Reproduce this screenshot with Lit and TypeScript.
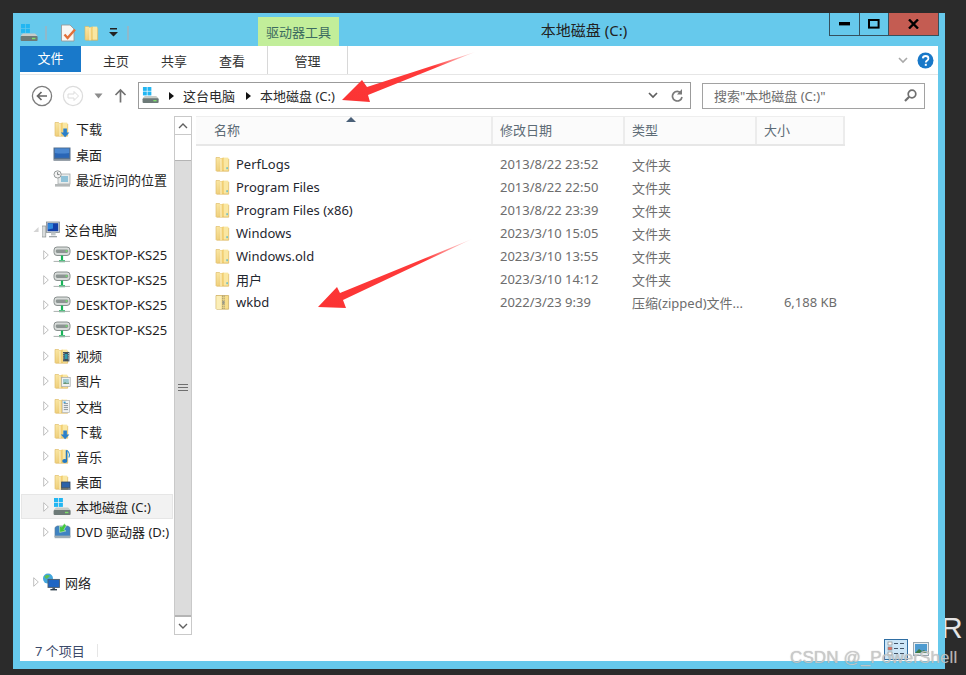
import { LitElement, html, css, svg } from "lit";
import { customElement } from "lit/decorators.js";

const defs = (id: string) => svg`<defs>
  <linearGradient id=${id} x1="0" y1="0" x2="1" y2="1">
    <stop offset="0" stop-color="#fbe9a8"/><stop offset="1" stop-color="#e6bd5c"/>
  </linearGradient></defs>`;

let uid = 0;
const folderBase = (overlay: unknown = null, dot = true) => {
  const id = "f" + uid++;
  return html`<svg class="ic" width="18" height="18" viewBox="0 0 18 18">
    ${defs(id)}
    <path d="M2 2.5h3.5l1 1H14l.7.7V16.2H2.6L2 15.6z" fill="url(#${id})" stroke="#dcb65c" stroke-width=".6"/>
    <path d="M7 3.4 9.6 2.2v12.6L7 16.2z" fill="#f2cf72"/>
    <path d="M7 3.4V16.2" stroke="#fdf3c9" stroke-width="1.1"/>
    <path d="M9.8 2.6h4.4v13H9.8z" fill="#fae7a1"/>
    ${dot ? svg`<rect x="12.4" y="12.2" width="1.4" height="2" fill="#5fb8c9"/>` : null}
    ${overlay}
  </svg>`;
};

const zipIcon = () => html`<svg class="ic" width="18" height="18" viewBox="0 0 18 18">
  <path d="M2 2.5h12.6v13.7H2.6L2 15.6z" fill="#f7de8c" stroke="#c9a95a" stroke-width=".7"/>
  <path d="M2.4 3h5v13h-5z" fill="#fbeeb8"/>
  <path d="M8.2 3.2h2.4M8.2 5.2h2.4M8.2 7.2h2.4M8.2 9.2h2.4M8.2 11.2h2.4M8.2 13.2h2.4M8.2 15.2h2.4" stroke="#7b7b6a" stroke-width="1" stroke-dasharray="1.2 .6"/>
  <rect x="8.4" y="8" width="2" height="3.4" fill="#9a9a8a"/>
</svg>`;

const driveIcon = (w = 18) => html`<svg class="ic" width=${w} height=${w} viewBox="0 0 18 18">
  <rect x="1" y="0" width="4.1" height="4.1" fill="#22b6f2"/><rect x="5.8" y="0" width="4.1" height="4.1" fill="#22b6f2"/>
  <rect x="1" y="4.8" width="4.1" height="4.1" fill="#22b6f2"/><rect x="5.8" y="4.8" width="4.1" height="4.1" fill="#22b6f2"/>
  <path d="M1 11.5 3 9.6h12l2.2 2v1H1z" fill="#c8ccc8"/>
  <rect x=".6" y="12" width="17" height="5" rx="1" fill="#6d7a78"/>
  <rect x="12" y="13.8" width="3.4" height="1.4" fill="#7de26a"/>
</svg>`;

const netDrive = () => html`<svg class="ic" width="18" height="18" viewBox="0 0 18 18">
  <rect x="1" y="1" width="16" height="8.5" rx="3" fill="#d8dcda" stroke="#7f8684" stroke-width=".9"/>
  <rect x="2.8" y="3.4" width="12.4" height="3.6" rx="1.4" fill="#8d9593"/>
  <rect x="12.6" y="4.2" width="1.8" height="1.6" fill="#6fe06a"/>
  <path d="M9 9.5V14" stroke="#18b45a" stroke-width="2.2"/>
  <path d="M6 14.2h6v2H6z" fill="#18b45a"/>
  <path d="M.6 15.4H17" stroke="#a9b0ae" stroke-width="1"/>
</svg>`;

const arrowDown = svg`<path d="M10.3 8.4h3.6v4h2.5l-4.3 4.8-4.3-4.8h2.5z" fill="#2c80c9"/>`;
const filmOv = svg`<rect x="10" y="5" width="6.4" height="9.4" fill="#41505a"/><path d="M10.8 6v7.4M15.6 6v7.4" stroke="#cfd6da" stroke-width=".9" stroke-dasharray="1 .8"/><rect x="11.8" y="7" width="2.8" height="5" fill="#2f9ab0"/>`;
const picOv = svg`<rect x="8.6" y="5.4" width="8.6" height="9.2" fill="#eef1f2" stroke="#a3a8aa" stroke-width=".7"/><rect x="10" y="7" width="5.8" height="5" fill="#9ccad0"/><path d="M10 12l2-2 2 1.4 1.8-1V12z" fill="#6b9470"/>`;
const docOv = svg`<rect x="9.2" y="3.6" width="7.4" height="12" fill="#f1f3f4" stroke="#b0b4b6" stroke-width=".7"/><path d="M10.8 6.6h4.2M10.8 8.6h4.2M10.8 10.6h4.2M10.8 12.6h4.2" stroke="#7f8a92" stroke-width=".9"/><rect x="10.6" y="4.6" width="2" height="1.4" fill="#3aa3d8"/>`;
const musicOv = svg`<path d="M13.5 3.2v10.4" stroke="#2178c4" stroke-width="1.5"/><ellipse cx="11.8" cy="14" rx="2.6" ry="2" fill="#2178c4"/><path d="M14 3.4c2.4 2 3 4.8 1.8 7" stroke="#2f92d8" stroke-width="1.1" fill="none"/>`;
const deskOv = svg`<rect x="8.6" y="9" width="8.4" height="5.8" fill="#2a62a8" stroke="#34495e" stroke-width=".8"/><path d="M8 16h9.6" stroke="#465763" stroke-width="1.4"/>`;

const desktopIcon = () => html`<svg class="ic" width="18" height="18" viewBox="0 0 18 18">
  <rect x=".5" y="2.5" width="17" height="12" fill="#56708d"/>
  <rect x="1.8" y="3.6" width="14.4" height="9.2" fill="#2a66b6"/>
  <path d="M1.8 3.6h14.4v4.4c-5 .8-10 .8-14.4 0z" fill="#4a87d0"/>
  <rect x=".5" y="14.2" width="17" height="1.6" fill="#7f8b96"/>
</svg>`;

const recentIcon = () => html`<svg class="ic" width="18" height="18" viewBox="0 0 18 18">
  <rect x="5" y="4" width="12" height="10" fill="#e8ecec" stroke="#a8adad" stroke-width=".8"/>
  <rect x="8" y="6" width="7" height="6" fill="#8fc2d8"/>
  <circle cx="4.6" cy="4.4" r="3.6" fill="#f4f4f4" stroke="#8b9191" stroke-width=".9"/>
  <path d="M4.6 2.2v2.4h2" stroke="#5e6464" stroke-width=".8" fill="none"/>
  <path d="M2 14h15v2.6H2z" fill="#b4b8b8"/>
</svg>`;

const pcIcon = () => html`<svg class="ic" width="18" height="18" viewBox="0 0 18 18">
  <rect x="0" y="5" width="3.8" height="11" fill="#d9dcdc" stroke="#8c9292" stroke-width=".7"/>
  <rect x="4.4" y="1" width="13" height="10.4" fill="#cdd4d8" stroke="#858d92" stroke-width=".8"/>
  <rect x="5.6" y="2.2" width="10.6" height="8" fill="#123fa8"/>
  <path d="M6 2.6h5v5l-5 1z" fill="#2f86dc"/>
  <path d="M9 11.4h4.6v3H9z" fill="#c2c8ca"/><path d="M7 15h8v1.3H7z" fill="#9ea5a8"/>
</svg>`;

const dvdIcon = () => html`<svg class="ic" width="18" height="18" viewBox="0 0 18 18">
  <path d="M2 4.5 4 3h11l2 1.5v9.5H2z" fill="#3f83c2" stroke="#5a7f9e" stroke-width=".7"/>
  <rect x="1.6" y="12.6" width="15.8" height="2.6" fill="#9dacb5"/>
  <path d="M11.4.6 8.6 4 6.5 2.8l.2 6.6 6.2-1.4-2-1.4 2.4-3.8z" fill="#43c73f" stroke="#e8f6e3" stroke-width=".5"/>
</svg>`;

const networkIcon = () => html`<svg class="ic" width="18" height="18" viewBox="0 0 18 18">
  <circle cx="6" cy="5.6" r="5" fill="#43a6dd"/>
  <path d="M2.4 3.4c2-1.6 4.4-1.6 5.4-.6-.4 1.6-2 1.4-2.4 2.8-1.4.4-2.4-.6-3-2.2z" fill="#5dc053"/>
  <rect x="6" y="6.4" width="11.4" height="8" fill="#1f66c4" stroke="#4a5c6c" stroke-width=".9"/>
  <rect x="10.4" y="14.4" width="2.6" height="1.6" fill="#4a5c6c"/><rect x="8.4" y="16" width="6.6" height="1.4" fill="#2f3f4d"/>
</svg>`;

const tri = (filled = false) => html`<svg class="tri" width="6" height="10" viewBox="0 0 6 10"><path d="M.7.7 5.3 5 .7 9.3z" fill=${filled ? "#c4c4c4" : "#fff"} stroke="#b9b9b9" stroke-width=".9"/></svg>`;
const triDown = () => html`<svg class="tri" width="7" height="7" viewBox="0 0 7 7"><path d="M6.5.5v6H.5z" fill="#d4d4d4"/></svg>`;

type Nav = { t?: string; lvl?: number; icon?: () => unknown; exp?: "r" | "d"; sel?: boolean };
const desk = "DESKTOP-KS25";
const navRows: Nav[] = [
  { t: "下载", lvl: 1, icon: () => folderBase(arrowDown, false) },
  { t: "桌面", lvl: 1, icon: desktopIcon },
  { t: "最近访问的位置", lvl: 1, icon: recentIcon },
  {},
  { t: "这台电脑", lvl: 0, icon: pcIcon, exp: "d" },
  { t: desk, lvl: 1, icon: netDrive, exp: "r" },
  { t: desk, lvl: 1, icon: netDrive, exp: "r" },
  { t: desk, lvl: 1, icon: netDrive, exp: "r" },
  { t: desk, lvl: 1, icon: netDrive, exp: "r" },
  { t: "视频", lvl: 1, icon: () => folderBase(filmOv, false), exp: "r" },
  { t: "图片", lvl: 1, icon: () => folderBase(picOv, false), exp: "r" },
  { t: "文档", lvl: 1, icon: () => folderBase(docOv, false), exp: "r" },
  { t: "下载", lvl: 1, icon: () => folderBase(arrowDown, false), exp: "r" },
  { t: "音乐", lvl: 1, icon: () => folderBase(musicOv, false), exp: "r" },
  { t: "桌面", lvl: 1, icon: () => folderBase(deskOv, false), exp: "r" },
  { t: "本地磁盘 (C:)", lvl: 1, icon: () => driveIcon(18), exp: "r", sel: true },
  { t: "DVD 驱动器 (D:)", lvl: 1, icon: dvdIcon, exp: "r" },
  {},
  { t: "网络", lvl: 0, icon: networkIcon, exp: "r" },
];

const files = [
  ["PerfLogs", "2013/8/22 23:52", "文件夹", ""],
  ["Program Files", "2013/8/22 22:50", "文件夹", ""],
  ["Program Files (x86)", "2013/8/22 23:39", "文件夹", ""],
  ["Windows", "2023/3/10 15:05", "文件夹", ""],
  ["Windows.old", "2023/3/10 13:55", "文件夹", ""],
  ["用户", "2023/3/10 14:12", "文件夹", ""],
  ["wkbd", "2022/3/23 9:39", "压缩(zipped)文件...", "6,188 KB"],
];

@customElement("app-root")
export class AppRoot extends LitElement {
  static styles = css`
    :host { display: block; position: relative; width: 966px; height: 675px; background: #2b2b2b; overflow: hidden;
      font-family: "Noto Sans", "Noto Sans CJK SC", sans-serif; font-size: 13px; color: #1e1e1e; }
    .bgtext { position: absolute; left: 916px; top: 608px; font: 30px/40px "Liberation Sans", sans-serif; color: #e4e4e4; white-space: pre; }
    .window { position: relative; box-sizing: border-box; margin: 13px 0 0 13px; width: 932px; height: 656px; background: #66c9ec; padding: 0 7px 8px; display: flex; flex-direction: column; }
    .ic { display: block; flex: none; }
    .titlebar { height: 33px; display: flex; flex: none; }
    .qat { width: 238px; display: flex; align-items: center; flex: none; padding-top: 6px; box-sizing: border-box; }
    .qsep { width: 2px; height: 14px; background: #8fb9cb; margin: 0 12px 0 7px; }
    .qsep.b { margin: 0 0 0 9px; }
    .ctx { align-self: flex-end; width: 81px; height: 29px; flex: none; background: #c2ee9a; color: #3c6b60; display: flex; align-items: center; justify-content: center; }
    .title { flex: 1; text-align: center; font-size: 15px; line-height: 34px; color: #222; }
    .controls { display: flex; width: 110px; height: 23px; flex: none; margin-right: -1px; }
    .ctl { display: flex; align-items: center; justify-content: center; box-sizing: border-box; border: 1px solid #34505e; border-top: none; border-left-width: 1px; }
    .ctl.min { width: 31px; }
    .ctl.max { width: 29px; border-left: none; }
    .ctl.close { width: 50px; border-left: none; background: #c45c52; }
    .ribbon { height: 29px; flex: none; background: #fff; display: flex; align-items: flex-start; box-sizing: border-box; border-bottom: 1px solid #e6e6e6; }
    .tab { height: 26px; line-height: 30px; text-align: center; color: #333; width: 58px; }
    .tab.file { width: 61px; background: #1979ca; color: #fff; margin-right: 6px; line-height: 24px; }
    .tab.mg { width: 81px; box-sizing: border-box; height: 28px; margin-left: 6px; border-left: 1px solid #d8d8d8; border-right: 1px solid #d8d8d8; }
    .rspace { flex: 1; }
    .rright { display: flex; align-items: center; height: 28px; gap: 9px; padding-right: 4px; }
    .addr { height: 41px; flex: none; background: #fff; display: flex; align-items: center; }
    .navbtns { width: 118px; flex: none; display: flex; align-items: center; padding-left: 11px; box-sizing: border-box; }
    .abox { width: 553px; height: 27px; box-sizing: border-box; border: 1px solid #9b9b9b; flex: none; display: flex; align-items: center; padding-left: 3px; color: #2a2a2a; margin-top: 0; }
    .abox span { white-space: nowrap; }
    .crumb { margin: 0 9px 0 9px; }
    .aspace { flex: 1; }
    .sbox { width: 223px; height: 26px; box-sizing: border-box; border: 1px solid #a2a2a2; margin-left: 11px; flex: none; display: flex; align-items: center; padding: 0 7px 0 11px; color: #6e6e6e; justify-content: space-between; }
    .main { flex: 1; min-height: 0; background: #fff; display: flex; }
    .nav { width: 153px; flex: none; padding-top: 0.4px; overflow: hidden; }
    .nrow { height: 25.2px; display: flex; align-items: center; white-space: nowrap; box-sizing: border-box; position: relative; overflow: hidden; }
    .nrow.sel { background: #f2f2f2; box-shadow: inset 0 0 0 1px #e6e6e6; margin-left: 1px; padding-left: 0; }
    .exp { width: 6px; flex: none; display: flex; justify-content: center; }
    .nrow.l1 { padding-left: 23px; }
    .nrow.l1.sel { padding-left: 22px; }
    .nrow.l1 .ic { margin-left: 4px; margin-right: 5px; }
    .nrow.l0 { padding-left: 13px; }
    .nrow.l0 .ic { margin-left: 3px; margin-right: 5px; }
    .sb { width: 18px; height: 519px; flex: none; margin-left: 1px; display: flex; flex-direction: column; box-sizing: border-box; border: 1px solid #c9c9c9; }
    .sbtn { height: 17px; flex: none; display: flex; align-items: center; justify-content: center; }
    .sgap { height: 25px; flex: none; border-top: 1px solid #c9c9c9; }
    .thumb { flex: 1; background: #dcdcdc; border-top: 1px solid #b4b4b4; border-bottom: 2px solid #b4b4b4; display: flex; align-items: center; justify-content: center; padding-bottom: 0; }
    .grip { width: 10px; height: 9px; background: repeating-linear-gradient(#6f6f6f 0 1px, transparent 1px 3px); margin-top: 0; }
    .pane { flex: 1; margin-left: 4px; position: relative; }
    .hdr { display: grid; grid-template-columns: 297px 132px 132px 88px; height: 30px; width: 649px; box-sizing: border-box; border-top: 1px solid #eeeeee; border-bottom: 2px solid #e7e7e7; background: #fbfbfb; }
    .hc { padding-left: 7px; line-height: 27px; color: #5d6b76; border-right: 2px solid #ececec; }
    .hc.first { padding-left: 18px; }
    .sort { position: absolute; left: 150px; top: 1px; }
    .rows { padding-top: 6.5px; }
    .row { display: grid; grid-template-columns: 297px 132px 132px 88px; height: 23px; width: 649px; align-items: center; white-space: nowrap; }
    .cname { display: flex; align-items: center; gap: 4px; padding-left: 18px; color: #1f2730; }
    .cd { padding-left: 7px; color: #6d6d6d; }
    .csz { text-align: right; padding-right: 8px; color: #6d6d6d; }
    .status { height: 21px; flex: none; background: #fff; display: flex; align-items: center; padding-left: 15px; color: #3b4a6a; }
    .ssep { width: 1px; height: 13px; background: #e6e6e6; margin-left: 12px; }
    .vbtns { margin-left: auto; display: flex; gap: 5px; align-items: center; margin-right: 9px; margin-top: -3px; }
    .vb { width: 24px; height: 21px; box-sizing: border-box; background: #cde6f7; border: 1px solid #2f6ea3; display: flex; align-items: center; justify-content: center; }
    .overlay { position: absolute; left: 0; top: 0; pointer-events: none; }
    .wm { position: absolute; left: 790px; top: 648px; font: 17px/20px "Liberation Sans", sans-serif; color: rgba(205,205,205,.85); white-space: nowrap; letter-spacing: .1px; text-shadow: 0 0 1px rgba(120,120,120,.6); }
  `;

  render() {
    return html`
      <div class="bgtext">2 R</div>
      <div class="window">
        <div class="titlebar">
          <div class="qat">
            ${driveIcon(18)}
            <div class="qsep"></div>
            <svg class="ic" width="18" height="18" viewBox="0 0 18 18">
              <path d="M2.5 1H11l4 4v12H2.5z" fill="#f7f7f5" stroke="#9a9a9a" stroke-width=".9"/>
              <path d="M5.5 10.5 8.6 14 16 5.5" fill="none" stroke="#e2703a" stroke-width="2.4"/>
            </svg>
            <span style="width:6px"></span>
            ${folderBase(null, false)}
            <svg style="margin-left:8px" width="9" height="9" viewBox="0 0 9 9"><path d="M1 0h7v1.4H1zM0 4h9L4.5 8.6z" fill="#222"/></svg>
            <div class="qsep b"></div>
          </div>
          <div class="ctx">驱动器工具</div>
          <div class="title">本地磁盘 (C:)</div>
          <div class="controls">
            <div class="ctl min"><svg width="11" height="4" viewBox="0 0 11 4"><rect width="11" height="3.4" fill="#000"/></svg></div>
            <div class="ctl max"><svg width="12" height="10" viewBox="0 0 12 10"><rect x="1" y="1" width="9.6" height="7.6" fill="none" stroke="#000" stroke-width="2"/></svg></div>
            <div class="ctl close"><svg width="11" height="10" viewBox="0 0 11 10"><path d="M1 .5 10 9.5M10 .5 1 9.5" stroke="#000" stroke-width="2.4"/></svg></div>
          </div>
        </div>

        <div class="ribbon">
          <div class="tab file">文件</div>
          <div class="tab">主页</div><div class="tab">共享</div><div class="tab">查看</div>
          <div class="tab mg">管理</div>
          <div class="rspace"></div>
          <div class="rright">
            <svg width="10" height="7" viewBox="0 0 10 7"><path d="M1 1l4 4 4-4" fill="none" stroke="#a9a9a9" stroke-width="1.6"/></svg>
            <svg width="17" height="17" viewBox="0 0 17 17"><circle cx="8.5" cy="8.5" r="8" fill="#1878c8"/><path d="M5.8 6.4c.2-3.2 5.6-3.2 5.6 0 0 2.2-2.6 2-2.6 4.2" fill="none" stroke="#fff" stroke-width="1.8"/><rect x="7.8" y="11.8" width="2" height="2" fill="#fff"/></svg>
          </div>
        </div>

        <div class="addr">
          <div class="navbtns">
            <svg width="22" height="22" viewBox="0 0 22 22"><circle cx="11" cy="11" r="9.6" fill="#fff" stroke="#7c7c7c" stroke-width="1.3"/><path d="M16 11H7M10.5 7 6.5 11l4 4" fill="none" stroke="#666" stroke-width="1.7"/></svg>
            <svg style="margin-left:9px" width="22" height="22" viewBox="0 0 22 22"><circle cx="11" cy="11" r="9.6" fill="#fff" stroke="#dcdcdc" stroke-width="1.2"/><path d="M6 9h6V6.5l4.5 4.5-4.5 4.5V13H6z" fill="none" stroke="#dcdcdc" stroke-width="1"/></svg>
            <svg style="margin-left:10px" width="9" height="6" viewBox="0 0 9 6"><path d="M.5.5h8L4.5 5.5z" fill="#8c8c8c"/></svg>
            <svg style="margin-left:11px" width="13" height="15" viewBox="0 0 13 15"><path d="M6.5 14.5V2M1.5 7 6.5 2l5 5" fill="none" stroke="#727272" stroke-width="1.7"/></svg>
          </div>
          <div class="abox">
            ${driveIcon(17)}
            <svg style="margin-left:10px" width="5" height="8" viewBox="0 0 5 8"><path d="M0 0l5 4-5 4z" fill="#111"/></svg>
            <span class="crumb">这台电脑</span>
            <svg style="margin-left:2px" width="5" height="8" viewBox="0 0 5 8"><path d="M0 0l5 4-5 4z" fill="#111"/></svg>
            <span class="crumb">本地磁盘 (C:)</span>
            <div class="aspace"></div>
            <svg width="10" height="7" viewBox="0 0 10 7"><path d="M1 1l4 4 4-4" fill="none" stroke="#5f5f5f" stroke-width="1.7"/></svg>
            <svg style="margin:0 7px 0 13px" width="12" height="13" viewBox="0 0 12 13"><path d="M10.2 4.4A4.8 4.8 0 1 0 11 8" fill="none" stroke="#7a7a7a" stroke-width="1.7"/><path d="M11 0v5.4H6z" fill="#7a7a7a"/></svg>
          </div>
          <div class="sbox">
            <span>搜索"本地磁盘 (C:)"</span>
            <svg width="13" height="13" viewBox="0 0 13 13"><circle cx="8" cy="5" r="3.8" fill="none" stroke="#6f6f6f" stroke-width="1.7"/><path d="M5.2 7.8 1 12" stroke="#6f6f6f" stroke-width="2.2"/></svg>
          </div>
        </div>

        <div class="main">
          <div class="nav">
            ${navRows.map((n) => !n.t ? html`<div class="nrow"></div>` : html`
              <div class="nrow l${n.lvl} ${n.sel ? "sel" : ""}">
                <div class="exp">${n.exp === "r" ? tri() : n.exp === "d" ? triDown() : null}</div>
                ${n.icon!()}
                <span>${n.t}</span>
              </div>`)}
          </div>
          <div class="sb">
            <div class="sbtn"><svg width="10" height="6" viewBox="0 0 10 6"><path d="M1 5l4-4 4 4" fill="none" stroke="#606060" stroke-width="1.4"/></svg></div>
            <div class="sgap"></div>
            <div class="thumb"><div class="grip"></div></div>
            <div class="sbtn"><svg width="10" height="6" viewBox="0 0 10 6"><path d="M1 1l4 4 4-4" fill="none" stroke="#606060" stroke-width="1.4"/></svg></div>
          </div>
          <div class="pane">
            <svg class="sort" width="10" height="5" viewBox="0 0 10 5"><path d="M5 0l5 5H0z" fill="#4a6078"/></svg>
            <div class="hdr">
              <div class="hc first">名称</div><div class="hc">修改日期</div><div class="hc">类型</div><div class="hc">大小</div>
            </div>
            <div class="rows">
              ${files.map((f, i) => html`<div class="row">
                <div class="cname">${i === 6 ? zipIcon() : folderBase()}<span>${f[0]}</span></div>
                <div class="cd">${f[1]}</div>
                <div class="cd">${f[2]}</div>
                <div class="csz">${f[3]}</div>
              </div>`)}
            </div>
          </div>
        </div>

        <div class="status">
          <span>7 个项目</span><div class="ssep"></div>
          <div class="vbtns">
            <div class="vb"><svg width="18" height="16" viewBox="0 0 18 16"><rect x="1" y="1" width="4" height="3" fill="#fff" stroke="#8b8b8b" stroke-width=".7"/><rect x="1" y="6" width="4" height="3" fill="#e96a5a" stroke="#8b8b8b" stroke-width=".7"/><rect x="1" y="11" width="4" height="3" fill="#fff" stroke="#8b8b8b" stroke-width=".7"/><path d="M7 2.5h4M13 2.5h4M7 7.5h4M13 7.5h4M7 12.5h4M13 12.5h4" stroke="#44566a" stroke-width="1.1"/></svg></div>
            <svg width="16" height="14" viewBox="0 0 16 14"><rect x=".5" y=".5" width="15" height="13" fill="#e9eef1" stroke="#98a6b0"/><rect x="2" y="2" width="12" height="9" fill="#4e9bd0"/><path d="M2 11l4-4 3 2 2-1 3 3z" fill="#3d7a44"/></svg>
          </div>
        </div>
      </div>

      <svg class="overlay" width="966" height="675" viewBox="0 0 966 675">
        <defs>
          <linearGradient id="a1" x1="1" y1="0" x2="0" y2="1"><stop offset="0" stop-color="#ff3b3b" stop-opacity=".1"/><stop offset=".3" stop-color="#ff3b3b"/><stop offset="1" stop-color="#fb3333"/></linearGradient>
        </defs>
        <path d="M342 100 362 80 367 87 475 52 368 95 370 102z" fill="url(#a1)"/>
        <path d="M318 307 337 287 340 293 472 239 343 300 346 308z" fill="url(#a1)"/>
      </svg>
      <div class="wm">CSDN @_PowerShell</div>
    `;
  }
}
